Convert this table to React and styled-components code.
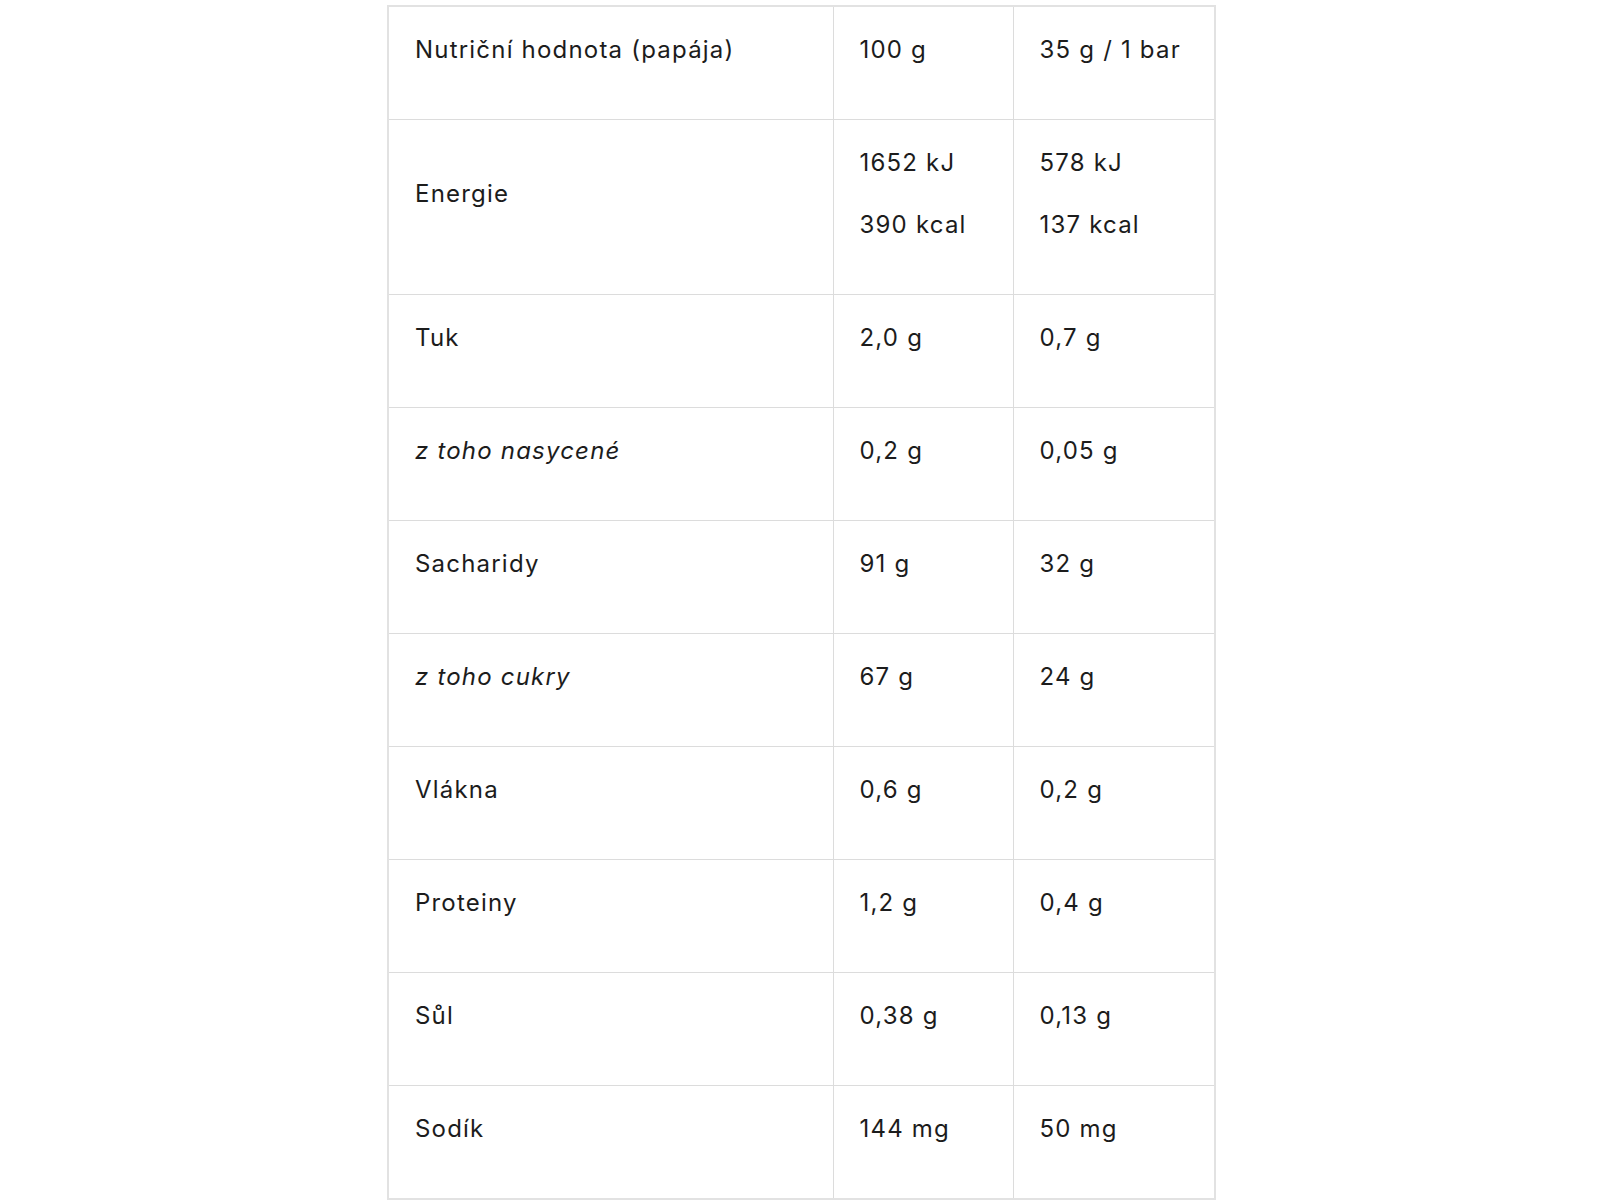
import React from "react";
import styled, { createGlobalStyle } from "styled-components";

const GlobalStyle = createGlobalStyle`
  body {
    margin: 0;
    background: #fff;
    font-family: "Inter", "Liberation Sans", sans-serif;
    color: #1c1c1c;
  }
`;

const Page = styled.div`
  box-sizing: border-box;
  width: 100%;
  padding: 5px 0 0 3px;
  display: flex;
  justify-content: center;
`;

const Table = styled.table`
  width: 827px;
  border-collapse: collapse;
  table-layout: fixed;
  border: 2px solid #e2e2e2;
`;

const Cell = styled.td`
  border: 1px solid #dcdcdc;
  padding: 25px 20px 25px 26px;
  vertical-align: middle;
  font-size: 24px;
  letter-spacing: 1.2px;
  font-style: ${(p) => (p.$italic ? "italic" : "normal")};
`;

const Line = styled.p`
  margin: 0 0 26px;
  line-height: 36px;
  white-space: nowrap;
`;

const rows = [
  { name: "Nutriční hodnota (papája)", a: ["100 g"], b: ["35 g / 1 bar"] },
  { name: "Energie", a: ["1652 kJ", "390 kcal"], b: ["578 kJ", "137 kcal"] },
  { name: "Tuk", a: ["2,0 g"], b: ["0,7 g"] },
  { name: "z toho nasycené", a: ["0,2 g"], b: ["0,05 g"], italic: true },
  { name: "Sacharidy", a: ["91 g"], b: ["32 g"] },
  { name: "z toho cukry", a: ["67 g"], b: ["24 g"], italic: true },
  { name: "Vlákna", a: ["0,6 g"], b: ["0,2 g"] },
  { name: "Proteiny", a: ["1,2 g"], b: ["0,4 g"] },
  { name: "Sůl", a: ["0,38 g"], b: ["0,13 g"] },
  { name: "Sodík", a: ["144 mg"], b: ["50 mg"] },
];

export default function App() {
  return (
    <>
      <GlobalStyle />
      <Page>
        <Table>
          <colgroup>
            <col style={{ width: 445 }} />
            <col style={{ width: 180 }} />
            <col style={{ width: 202 }} />
          </colgroup>
          <tbody>
            {rows.map((r) => (
              <tr key={r.name}>
                <Cell $italic={r.italic}>
                  <Line>{r.name}</Line>
                </Cell>
                <Cell>
                  {r.a.map((v) => (
                    <Line key={v}>{v}</Line>
                  ))}
                </Cell>
                <Cell>
                  {r.b.map((v) => (
                    <Line key={v}>{v}</Line>
                  ))}
                </Cell>
              </tr>
            ))}
          </tbody>
        </Table>
      </Page>
    </>
  );
}
